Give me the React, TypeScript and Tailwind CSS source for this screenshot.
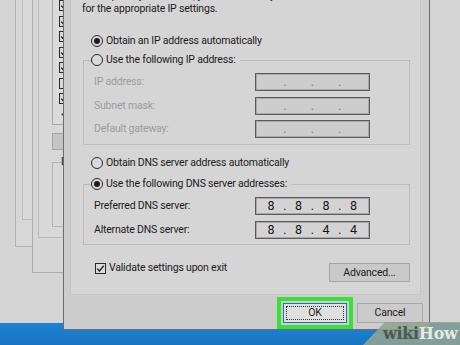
import { Fragment } from "react";

/** Radio bullet as drawn by the classic Windows theme. */
function Radio({ checked = false }: { readonly checked?: boolean }) {
  return (
    <span className="flex h-[12px] w-[12px] shrink-0 items-center justify-center rounded-full border-[1.5px] border-[#2a2a2a] bg-[#dadada]">
      {checked && <span className="h-[6px] w-[6px] rounded-full bg-[#1c1c1c]" />}
    </span>
  );
}

/** Four-octet IP field. Empty parts show only the dots. */
function IpBox({
  parts,
  disabled = false,
}: {
  readonly parts?: readonly string[];
  readonly disabled?: boolean;
}) {
  return (
    <div
      className={`flex h-[18px] w-[115px] items-center border border-[#5c5c5c] pl-[6px] tracking-normal shadow-[inset_0_0_0_1px_#a9a9a9] ${
        disabled ? "bg-[#cdcdcd] text-[#7a7a7a]" : "bg-[#d3d3d3] text-[#151515]"
      }`}
    >
      {[0, 1, 2, 3].map((i) => (
        <Fragment key={i}>
          {i > 0 && <span className="w-[9.5px] text-center text-[12px] leading-[18px]">.</span>}
          <span className="w-[18px] text-center text-[12.5px] leading-[18px]">{parts?.[i] ?? ""}</span>
        </Fragment>
      ))}
    </div>
  );
}

function FieldRow({
  label,
  disabled = false,
  parts,
}: {
  readonly label: string;
  readonly disabled?: boolean;
  readonly parts?: readonly string[];
}) {
  return (
    <div className="ml-[3px] flex h-[18px] items-center">
      <span className={`w-[161px] ${disabled ? "text-[#9c9c9c]" : ""}`}>{label}</span>
      <IpBox parts={parts} disabled={disabled} />
    </div>
  );
}

function RadioGroupBox({
  legend,
  checked,
  children,
  className,
}: {
  readonly legend: string;
  readonly checked?: boolean;
  readonly children: React.ReactNode;
  readonly className: string;
}) {
  return (
    <fieldset className={`ml-[12px] mr-[10px] border border-[#bcbcbc] pl-[7px] ${className}`}>
      <legend className="flex h-[16px] items-center gap-[3px] pr-[4px]">
        <Radio checked={checked} />
        <span>{legend}</span>
      </legend>
      {children}
    </fieldset>
  );
}

function SmallCheck({ checked = true }: { readonly checked?: boolean }) {
  return (
    <span className="flex h-[11px] w-[11px] shrink-0 items-center justify-center border border-[#2a2a2a] bg-[#dadada]">
      {checked && (
        <svg width="9" height="9" viewBox="0 0 9 9">
          <path d="M1.2 4.6 L3.5 7 L7.8 1.6" fill="none" stroke="#1a1a1a" strokeWidth="1.3" />
        </svg>
      )}
    </span>
  );
}

export default function App() {
  const listChecks = [true, true, true, true, true, false, true];

  return (
    <div className="relative h-[345px] w-[460px] overflow-hidden bg-[#d4d4d4] font-['Roboto','Liberation_Sans',sans-serif] text-[10.5px] tracking-[-0.2px] text-[#1c1c1c]">
      {/* taskbar */}
      <div className="absolute inset-x-0 bottom-0 top-[323px] bg-[linear-gradient(180deg,#1f82d2,#1874c2)]" />

      {/* back window A */}
      <div className="absolute left-[15px] top-[-10px] h-[257px] w-[60px] border border-[#b2b2b2] bg-[#d7d7d7]">
        <div className="ml-[6px] h-[229px] border border-[#bcbcbc] bg-[#d9d9d9]" />
      </div>

      {/* back window B with the adapter properties list */}
      <div className="absolute left-[32px] top-[-10px] h-[283px] w-[60px] border border-[#adadad] bg-[#d6d6d6]">
        <div className="ml-[5px] h-[247px] border border-[#bababa] bg-[#d8d8d8] pl-[13px]">
          <div className="flex h-[133px] flex-col border border-[#a8a8a8] bg-[#dbdbdb] pl-[6px] pt-[5px]">
            {listChecks.map((c, i) => (
              <div key={i} className="flex h-[15.5px] items-center">
                <SmallCheck checked={c} />
              </div>
            ))}
            <div className="mb-[3px] ml-[2px] mt-auto text-[10px] leading-[12px] text-[#333]">&lt;</div>
          </div>
          <div className="mt-[8px] h-[17px] border border-[#a5a5a5] bg-[#c4c4c4]" />
          <div className="mt-[12px] h-[65px] border border-[#b5b5b5]">
            <span className="-mt-[7px] ml-[8px] block text-[10px] leading-[12px]">Description</span>
          </div>
        </div>
      </div>

      {/* Internet Protocol Version 4 properties dialog */}
      <div className="absolute left-[63px] top-[-60px] flex w-[367px] flex-col border border-[#6c6c6c] bg-[#cdcdcd]">
        <div className="ml-[6px] mr-[8px] mt-[9px] flex flex-col border border-[#c6c6c6] bg-[#d5d5d5] pb-[12px]">
          <div className="ml-[11px] mt-[38px] leading-[13px]">
            <div>this capability. Otherwise, you need to ask your network administrator</div>
            <div>for the appropriate IP settings.</div>
          </div>

          <div className="ml-[20px] mt-[18px] flex h-[16px] items-center gap-[3px]">
            <Radio checked />
            <span>Obtain an IP address automatically</span>
          </div>

          <RadioGroupBox legend="Use the following IP address:" className="mt-[3px] pb-[6px]">
            <div className="mt-[5px] flex flex-col gap-[5.5px]">
              <FieldRow label="IP address:" disabled />
              <FieldRow label="Subnet mask:" disabled />
              <FieldRow label="Default gateway:" disabled />
            </div>
          </RadioGroupBox>

          <div className="ml-[20px] mt-[10px] flex h-[16px] items-center gap-[3px]">
            <Radio />
            <span>Obtain DNS server address automatically</span>
          </div>

          <RadioGroupBox legend="Use the following DNS server addresses:" checked className="mt-[5px] pb-[5px]">
            <div className="mt-[5px] flex flex-col gap-[6px]">
              <FieldRow label="Preferred DNS server:" parts={["8", "8", "8", "8"]} />
              <FieldRow label="Alternate DNS server:" parts={["8", "8", "4", "4"]} />
            </div>
          </RadioGroupBox>

          <div className="ml-[24px] mr-[10px] mt-[17px] flex items-start justify-between">
            <div className="flex h-[12px] items-center gap-[3px]">
              <SmallCheck />
              <span>Validate settings upon exit</span>
            </div>
            <button className="mt-[1px] h-[19px] w-[81px] border border-[#a6a6a6] bg-[#c9c9c9]">
              Advanced...
            </button>
          </div>
        </div>

        <div className="flex items-start justify-end gap-[4px] pb-[6px] pr-[6px] pt-[8px]">
          <div className="-my-[6px] border-[4px] border-[#36e236] p-[2px]">
            <button className="flex h-[20px] w-[64px] items-center justify-center border border-[#2f6fb0] bg-[#e0e0e0] p-[2px]">
              <span className="flex h-full w-full items-center justify-center border border-dotted border-[#333]">
                OK
              </span>
            </button>
          </div>
          <button className="h-[20px] w-[66px] border border-[#a8a8a8] bg-[#cbcbcb]">Cancel</button>
        </div>
      </div>

      {/* wikiHow watermark */}
      <div className="absolute bottom-0 left-[363px] right-0 top-[322px] flex items-end bg-[rgba(146,164,146,0.88)] pb-[2px] pl-[20px] [clip-path:polygon(22px_0,100%_0,100%_100%,0_100%)]">
        <span className="font-['DejaVu_Serif',serif] text-[16px] font-bold leading-[19px] tracking-[-0.3px]">
          <span className="text-[#4a5a4c]">wiki</span>
          <span className="text-[#e4ebe4]">How</span>
        </span>
      </div>
    </div>
  );
}
